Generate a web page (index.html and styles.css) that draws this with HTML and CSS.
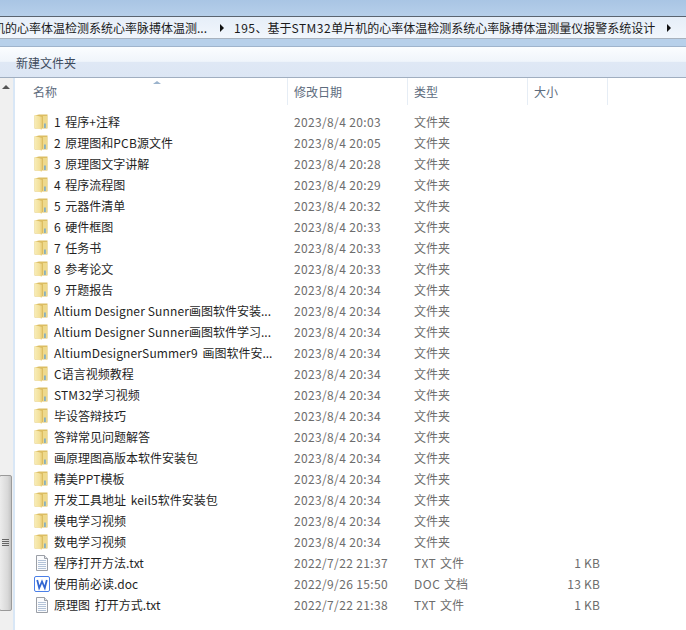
FILE: index.html
```html
<!DOCTYPE html>
<html lang="zh">
<head>
<meta charset="utf-8">
<title>Explorer</title>
<link rel="stylesheet" href="styles.css">
</head>
<body>
<svg class="defs" width="0" height="0">
  <defs>
    <linearGradient id="fg" x1="0" y1="0" x2="1" y2="0">
      <stop offset="0" stop-color="#f8edb8"/><stop offset="0.7" stop-color="#f3e09a"/><stop offset="1" stop-color="#e6ca74"/>
    </linearGradient>
    <symbol id="folder" viewBox="0 0 14 16">
      <path d="M.5 1.5 L5 .5 H13.5 V14.5 H.5 Z" fill="#dcbd62"/>
      <path d="M9 2 H13 V14 H9 Z" fill="#eed98c"/>
      <path d="M.5 1 L8 3 V15.5 L.5 14 Z" fill="url(#fg)"/>
      <rect x="10.3" y="9.5" width="1.3" height="4.5" fill="#5f9fd2"/>
    </symbol>
    <symbol id="txt" viewBox="0 0 12 16">
      <path d="M.5.5 H8.5 L11.5 3.5 V15.5 H.5 Z" fill="#fafbfd" stroke="#9b9fa6"/>
      <path d="M8.5.5 V3.5 H11.5" fill="#e4e7ec" stroke="#9b9fa6"/>
      <path d="M2 5.5 H10 M2 7.5 H10 M2 9.5 H10 M2 11.5 H10 M2 13.5 H10" stroke="#b3c3d8" fill="none"/>
    </symbol>
    <symbol id="doc" viewBox="0 0 16 16">
      <rect x=".5" y=".5" width="15" height="15" rx="1.5" fill="#fff" stroke="#4a7fe8"/>
      <path d="M3.2 4 L5.2 12 L8 5.5 L10.8 12 L12.8 4" fill="none" stroke="#3266d2" stroke-width="1.8"/>
    </symbol>
  </defs>
</svg>
<div class="window">
  <div class="topband"></div>
  <div class="address">
    <div class="crumb crumb-first"><span class="crumb-text">机的心率体温检测系统心率脉搏体温测...</span></div>
    <span class="arrow"></span>
    <div class="crumb crumb-second"><span class="la-wide">195</span>、基于<span class="la-wide">STM32</span>单片机的心率体温检测系统心率脉搏体温测量仪报警系统设计</div>
    <span class="arrow arrow-end"></span>
  </div>
  <div class="midband"></div>
  <div class="toolbar"><span class="tool">新建文件夹</span></div>
  <div class="content">
    <div class="scrollbar">
      <span class="scroll-up"></span>
      <div class="thumb"><span class="grip"></span></div>
    </div>
    <div class="pane">
      <div class="head">
        <div class="hc c-name">名称<span class="sort"></span></div>
        <div class="hc c-date">修改日期</div>
        <div class="hc c-type">类型</div>
        <div class="hc c-size">大小</div>
      </div>
      <div class="rows">
        <div class="row"><svg class="ico"><use href="#folder"/></svg><span class="name">1 程序+注释</span><span class="date">2023/8/4 20:03</span><span class="type">文件夹</span></div>
        <div class="row"><svg class="ico"><use href="#folder"/></svg><span class="name">2 原理图和<span class="la">PCB</span>源文件</span><span class="date">2023/8/4 20:05</span><span class="type">文件夹</span></div>
        <div class="row"><svg class="ico"><use href="#folder"/></svg><span class="name">3 原理图文字讲解</span><span class="date">2023/8/4 20:28</span><span class="type">文件夹</span></div>
        <div class="row"><svg class="ico"><use href="#folder"/></svg><span class="name">4 程序流程图</span><span class="date">2023/8/4 20:29</span><span class="type">文件夹</span></div>
        <div class="row"><svg class="ico"><use href="#folder"/></svg><span class="name">5 元器件清单</span><span class="date">2023/8/4 20:32</span><span class="type">文件夹</span></div>
        <div class="row"><svg class="ico"><use href="#folder"/></svg><span class="name">6 硬件框图</span><span class="date">2023/8/4 20:33</span><span class="type">文件夹</span></div>
        <div class="row"><svg class="ico"><use href="#folder"/></svg><span class="name">7 任务书</span><span class="date">2023/8/4 20:33</span><span class="type">文件夹</span></div>
        <div class="row"><svg class="ico"><use href="#folder"/></svg><span class="name">8 参考论文</span><span class="date">2023/8/4 20:33</span><span class="type">文件夹</span></div>
        <div class="row"><svg class="ico"><use href="#folder"/></svg><span class="name">9 开题报告</span><span class="date">2023/8/4 20:34</span><span class="type">文件夹</span></div>
        <div class="row"><svg class="ico"><use href="#folder"/></svg><span class="name"><span class="la">Altium Designer Sunner</span>画图软件安装...</span><span class="date">2023/8/4 20:34</span><span class="type">文件夹</span></div>
        <div class="row"><svg class="ico"><use href="#folder"/></svg><span class="name"><span class="la">Altium Designer Sunner</span>画图软件学习...</span><span class="date">2023/8/4 20:34</span><span class="type">文件夹</span></div>
        <div class="row"><svg class="ico"><use href="#folder"/></svg><span class="name"><span class="la">AltiumDesignerSummer9</span> 画图软件安...</span><span class="date">2023/8/4 20:34</span><span class="type">文件夹</span></div>
        <div class="row"><svg class="ico"><use href="#folder"/></svg><span class="name">C语言视频教程</span><span class="date">2023/8/4 20:34</span><span class="type">文件夹</span></div>
        <div class="row"><svg class="ico"><use href="#folder"/></svg><span class="name"><span class="la">STM32</span>学习视频</span><span class="date">2023/8/4 20:34</span><span class="type">文件夹</span></div>
        <div class="row"><svg class="ico"><use href="#folder"/></svg><span class="name">毕设答辩技巧</span><span class="date">2023/8/4 20:34</span><span class="type">文件夹</span></div>
        <div class="row"><svg class="ico"><use href="#folder"/></svg><span class="name">答辩常见问题解答</span><span class="date">2023/8/4 20:34</span><span class="type">文件夹</span></div>
        <div class="row"><svg class="ico"><use href="#folder"/></svg><span class="name">画原理图高版本软件安装包</span><span class="date">2023/8/4 20:34</span><span class="type">文件夹</span></div>
        <div class="row"><svg class="ico"><use href="#folder"/></svg><span class="name">精美<span class="la">PPT</span>模板</span><span class="date">2023/8/4 20:34</span><span class="type">文件夹</span></div>
        <div class="row"><svg class="ico"><use href="#folder"/></svg><span class="name">开发工具地址 <span class="la">keil5</span>软件安装包</span><span class="date">2023/8/4 20:34</span><span class="type">文件夹</span></div>
        <div class="row"><svg class="ico"><use href="#folder"/></svg><span class="name">模电学习视频</span><span class="date">2023/8/4 20:34</span><span class="type">文件夹</span></div>
        <div class="row"><svg class="ico"><use href="#folder"/></svg><span class="name">数电学习视频</span><span class="date">2023/8/4 20:34</span><span class="type">文件夹</span></div>
        <div class="row"><svg class="ico ico-txt"><use href="#txt"/></svg><span class="name">程序打开方法.txt</span><span class="date">2022/7/22 21:37</span><span class="type"><span class="la-wide">TXT</span> 文件</span><span class="size">1 KB</span></div>
        <div class="row"><svg class="ico ico-doc"><use href="#doc"/></svg><span class="name">使用前必读.doc</span><span class="date">2022/9/26 15:50</span><span class="type"><span class="la-wide">DOC</span> 文档</span><span class="size">13 KB</span></div>
        <div class="row"><svg class="ico ico-txt"><use href="#txt"/></svg><span class="name">原理图 打开方式.txt</span><span class="date">2022/7/22 21:38</span><span class="type"><span class="la-wide">TXT</span> 文件</span><span class="size">1 KB</span></div>
      </div>
    </div>
  </div>
</div>
</body>
</html>
```
FILE: styles.css
```css
* { box-sizing: border-box; }
html, body { margin: 0; padding: 0; }
body { width: 686px; height: 630px; overflow: hidden; background: #fff; font-family: "Noto Sans CJK SC", "Noto Sans", sans-serif; font-size: 12px; color: #2a2a2a; }
.defs { position: absolute; }
.la { letter-spacing: .14px; word-spacing: 0; }
.la-wide { letter-spacing: .5px; }
.window { display: flex; flex-direction: column; height: 630px; }
.topband { height: 17px; background: linear-gradient(#a9c5e4, #b6cfea); border-bottom: 1px solid #5a6470; }
.address { height: 22px; display: flex; align-items: center; background: linear-gradient(#e6eef8, #f1f6fc); border-bottom: 1px solid #a8b2be; color: #1a1a1a; white-space: nowrap; overflow: hidden; }
.crumb-first { width: 207px; overflow: hidden; display: flex; justify-content: flex-end; flex: none; }
.crumb-text { flex: none; }
.crumb-second { flex: none; width: 422px; margin-left: 10px; }
.arrow { flex: none; width: 0; height: 0; border-left: 4px solid #111; border-top: 4px solid transparent; border-bottom: 4px solid transparent; margin-left: 13px; }
.arrow-end { margin-left: 11px; }
.midband { height: 8px; background: #b7d0ea; border-bottom: 1px solid #9fb4cc; }
.toolbar { height: 31px; display: flex; align-items: center; padding-left: 16px; background: linear-gradient(#fbfdff 0, #f0f5fb 48%, #dfe8f5 50%, #dce6f4 100%); border-bottom: 1px solid #a0aec0; color: #3d4a5c; }
.content { flex: 1; display: flex; min-height: 0; }
.scrollbar { width: 13px; position: relative; background: #f0f0f0; flex: none; }
.scroll-up { position: absolute; left: 2px; top: 7px; width: 0; height: 0; border-left: 4px solid transparent; border-right: 4px solid transparent; border-bottom: 4px solid #555; }
.thumb { position: absolute; left: -1px; top: 397px; bottom: 19px; width: 13px; background: linear-gradient(90deg, #ececec, #d8d8d8 70%, #c4c4c4); border: 1px solid #9a9a9a; border-radius: 2px; display: flex; align-items: center; justify-content: center; }
.grip { width: 7px; height: 8px; background: repeating-linear-gradient(#666 0 1px, transparent 1px 2px); }
.pane { flex: 1; border-left: 2px solid #d9e7f6; }
.head { height: 31px; display: flex; color: #5d6b7d; position: relative; }
.hc { padding-top: 5px; height: 27px; border-right: 1px solid #e6edf5; line-height: 18px; flex: none; }
.c-name { width: 273px; padding-left: 18px; position: relative; }
.c-date { width: 120px; padding-left: 6px; }
.c-type { width: 120px; padding-left: 6px; }
.c-size { width: 80px; padding-left: 6px; }
.sort { position: absolute; left: 138px; top: 3px; width: 0; height: 0; border-left: 4px solid transparent; border-right: 4px solid transparent; border-bottom: 3px solid #9bb3cc; }
.rows { padding-top: 2px; }
.row { height: 21px; display: flex; align-items: center; position: relative; white-space: nowrap; }
.ico { width: 14px; height: 16px; margin-left: 19px; flex: none; }
.ico-txt { width: 12px; height: 16px; margin-left: 21px; }
.ico-doc { width: 16px; height: 16px; margin-left: 19px; }
.name { position: absolute; left: 39px; color: #1f1f1f; word-spacing: 2px; }
.date { position: absolute; left: 279px; color: #6d6d6d; letter-spacing: .35px; }
.type { position: absolute; left: 399px; color: #6d6d6d; word-spacing: 1px; }
.size { position: absolute; right: 86px; width: 80px; text-align: right; color: #6d6d6d; letter-spacing: .2px; }
```
